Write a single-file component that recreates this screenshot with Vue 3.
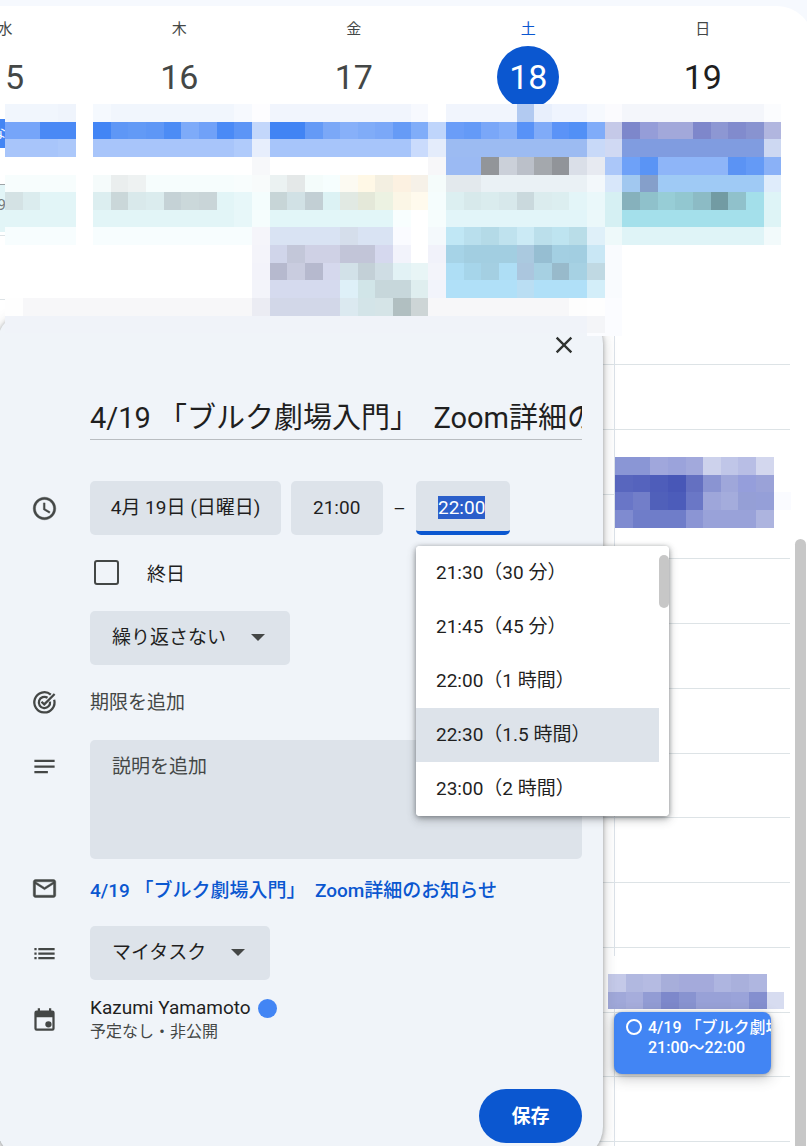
<script setup>
import { onMounted, ref } from 'vue'

const title = ref('4/19 「ブルク劇場入門」\u00a0 Zoom詳細のお知らせ')
const startTime = ref('21:00')
const endTime = ref('22:00')
const allDay = ref(false)
const note = ref('')
const endInput = ref(null)

const days = [
  { name: '木', date: 16 },
  { name: '金', date: 17 },
  { name: '土', date: 18, today: true },
  { name: '日', date: 19, strong: true },
]

const options = [
  '21:30（30 分）',
  '21:45（45 分）',
  '22:00（1 時間）',
  '22:30（1.5 時間）',
  '23:00（2 時間）',
]

// Each row lists cell colours; "*n" repeats a cell and "-" leaves it empty.
const weekRows = [
  'f1f6fd*3 eff4fc - f5f9fe f1f6fd*7 f6f9fe fdfdff f1f5fd*8 f7f9fe - f1f5fd*4 b2caf1 e8effc eff4fe*2 f6f9fe fbfbfe f4f6fb*8 fbfcfe',
  '76a5f9*2 4a89f5*2 - 4285f5 5e97f6 629af6 5e97f6 4c8cf5 7eabf9 70a1f8 4a8af6 5c95f6 c3d7fb 4184f4*2 649af6 7ba8f7 87b0f9 80acf8 7ba8f8 669bf6 80adf9 bfd5fb 6a9df8 649af7 7aa7f8 85aff9 5892f7 80abf8 5b93f7 5290f6 80acf9 c5c9e8 7d87cb 959dd8 a2a8da*2 7e87cb 8d97d3 818bcd 8893d0 b1b6df',
  'a8c5fa*3 acc8fa - a8c5fa*8 b0cbfb e7eefc a7c5fa*8 cadbfc e4ecfb 9cbbf2*8 c8d9f8 d0d9f3 809ce0*8 cdd8f2',
  '-*14 f7f8fa -*9 f7f7f9 9bbaf3*2 929599 cbd0d9 bbc0c9 a4a8ad 919499 dadfe8 e7eaf1 abc7f9 6ea1f8 5a94f5 8eb5f8*4 5b93f4 649af6 8ab1f7',
  'f7fdfd*4 - f5fbfb eaeeee eef2f2 f6fdfd*5 f8fdfd f8fbfb ebf2f2 e4e8e8 f4fcfb f6fefe fcfaf2 fff8e6 f3efe1 fcf1e1 f6f1e8 f5fcfb e3e9ed*2 eaf1f5*6 f3f8fb d8e7fa a1c8f0 859fca 9fcaf5*6 dfecfb',
  'd4e2e4 dbecee e2f5f7*2 - dceef0 cad7d9 d9e9eb dbecee c5d2d6 cbd8da c9d5d8 e2f5f7 e7f7f9 f4fdfd c7d5d7 d1e1e5 c2cfd4 dcf2f4 e1e9e3 e4e8d9 ecf2e2 fbf6e6 fffaed f5fdfd dceff1 d7e9eb daecee d7e8eb cad9dd dbecee dceef0 e3f5f8 eaf8fa d6f0f3 86b1bc 8fc1cb 97cdd6 92c7d0 8cbbc5 729ba3 90c1cb a3dfea def4f7',
  'e2f5f7*4 - e2f5f7*8 e7f7f9 f5fdfd e2f6f8*7 f8fefe - f6fdfd e2f5f9*8 ebf8fa d5f0f3 a4e0eb*8 def4f6',
  'f7fdfe*4 - f7fdfe*9 f5f5fa d9e3f3*4 d5deeb d9e3f3*2 fafbff - f4f9fc c0e7f5 b9dfed b4dae7 bfe2ee cbeaf5 bbdfeb bee4f0 b9dde8 dff0f9 eef9fa dff4f7*8 f2fafb',
  '-*14 f4f4fa d0d5ea c3c7d9 cfd1e5*2 c2c5d8*2 d5d8ee f2f3fb - f1f2fa a6d3e7 a2cee1*3 aac9df 96bed2 a3cfe2 a2cee1 c9e7f5 f9fbfe',
  '-*14 f3f3fa b6b9ce c9ccdf b6b9ce d5d8ed d2e1e8 c3d0d7 cfdde4 e2f2f5 e8f5f6 f3f4fa aedef5 a6d5ea a4cfe2 aedef5 abc6de a6d0e2 98bacb a6d1e3 c0d9e3 f9fbfe',
  '-*14 f3f4fa d5daee*4 def0f8 d1e5e8 c7d7db*2 dfeeef f2f4fb b0e0f8*4 badef3 b0e0f8*3 d3eef9 f9fbfe',
  'fefefe f7f7f9*13 ebecf3 d2d7e8*4 dbe9f0 d3e4e8 d5e4e7 b1bfc1 cdd5d6 f7f7f9*8 fdfdfd fefefe fbfcff',
  'f0f3f9*33 f4f5f8 fbfcff',
]
const afternoonRows = [
  '8a96d5*2 a0a7dc 9ba3db a2a9dc cdd2ec c0c6e8 b8bee5 d3d7ee',
  '5866be 5563bd 4e5dba 4857b7 6470c1 8a94d2 9fa7da 959edb 9aa2d8',
  '6976c7 727ec9 5060ba 4c5cba 6a77c6 9ea6da a4acdc 959fd6 959fd8 fafbff',
  '7f8bd0 6f7dc9*3 8b95d4 99a2d9*3 adb4df',
]
const eveningRows = [
  'c4c9e8 b1b8e0 b5bbe2 a7aeda a4aadb*2 aeb5e0 a9b0dc afb6e0',
  'a0a8d9 a6addc 929cd4 7d88cb 8893d0 98a1d7*2 9aa3d9 848fcf d7dcf0',
]

function toCells(rows) {
  const edge = (n) => Math.round(n * 17.64)
  const cells = []
  rows.forEach((row, r) => {
    let column = 0
    for (const token of row.split(' ')) {
      const [colour, times] = token.split('*')
      const span = Number(times || 1)
      if (colour !== '-') {
        cells.push({
          x: edge(column),
          y: edge(r),
          w: edge(column + span) - edge(column),
          h: edge(r + 1) - edge(r),
          fill: '#' + colour,
        })
      }
      column += span
    }
  })
  return cells
}

const weekCells = toCells(weekRows)
const afternoonCells = toCells(afternoonRows)
const eveningCells = toCells(eveningRows)

onMounted(() => {
  endInput.value.focus({ preventScroll: true })
  endInput.value.select()
})
</script>

<template>
  <div class="page">
    <main class="calendar">
      <header class="days">
        <div class="day-clip">
          <div class="day">
            <span class="day-name">水</span>
            <span class="day-date">15</span>
          </div>
        </div>
        <div v-for="d in days" :key="d.date" class="day" :class="{ today: d.today, strong: d.strong }">
          <span class="day-name">{{ d.name }}</span>
          <span class="day-date">{{ d.date }}</span>
        </div>
      </header>
      <div class="hours">
        <div v-for="n in 16" :key="n" class="hour"></div>
        <div class="day-line"></div>
      </div>
      <div class="edge-event">な</div>
      <div class="edge-event pale">9</div>
      <svg class="mosaic afternoon" width="177" height="71" shape-rendering="crispEdges" aria-hidden="true">
        <rect v-for="(c, i) in afternoonCells" :key="i" :x="c.x" :y="c.y" :width="c.w" :height="c.h" :fill="c.fill" />
      </svg>
      <svg class="mosaic evening" width="182" height="53" shape-rendering="crispEdges" aria-hidden="true">
        <rect width="182" height="35" fill="#fff" />
        <g transform="translate(0 18)">
          <rect v-for="(c, i) in eveningCells" :key="i" :x="c.x" :y="c.y" :width="c.w" :height="c.h" :fill="c.fill" />
        </g>
      </svg>
      <button type="button" class="task-event">
        <svg class="task-ring" width="18" height="18" viewBox="0 0 18 18" aria-hidden="true">
          <circle cx="9" cy="9" r="7" fill="none" stroke="#fff" stroke-width="2" />
        </svg>
        <span class="task-text">
          <span>4/19 「ブルク劇場入門」</span>
          <span>21:00～22:00</span>
        </span>
      </button>
      <div class="page-scroll"></div>
    </main>

    <form class="dialog" role="dialog" aria-label="タスク" @submit.prevent>
      <button type="button" class="close" aria-label="閉じる">
        <svg width="28" height="28" viewBox="0 0 24 24" aria-hidden="true">
          <path fill="#303331" d="M19 6.41 17.59 5 12 10.59 6.41 5 5 6.41 10.59 12 5 17.59 6.41 19 12 13.41 17.59 19 19 17.59 13.41 12z" />
        </svg>
      </button>

      <div class="row title-row">
        <input v-model="title" class="title" type="text" aria-label="タイトル" />
      </div>

      <div class="row">
        <svg class="icon bold" viewBox="0 0 24 24" aria-hidden="true">
          <path d="M11.99 2C6.47 2 2 6.48 2 12s4.47 10 9.99 10C17.52 22 22 17.52 22 12S17.52 2 11.99 2zM12 20c-4.42 0-8-3.58-8-8s3.58-8 8-8 8 3.58 8 8-3.58 8-8 8zm.5-13H11v6l5.25 3.15.75-1.23-4.5-2.67z" />
        </svg>
        <div class="times">
          <button type="button" class="field date">4月 19日 (日曜日)</button>
          <input v-model="startTime" class="field start" type="text" aria-label="開始時間" />
          <span class="dash">–</span>
          <div class="end-wrap">
            <input ref="endInput" v-model="endTime" class="field end" type="text" aria-label="終了時間" />
            <div class="menu">
              <div class="menu-list" role="listbox" aria-label="終了時間">
                <button
                  v-for="(o, i) in options"
                  :key="o"
                  type="button"
                  role="option"
                  class="option"
                  :class="{ active: i === 3 }"
                  :aria-selected="i === 3"
                >{{ o }}</button>
              </div>
              <div class="menu-thumb"></div>
            </div>
          </div>
        </div>
      </div>

      <div class="row all-day">
        <label class="check">
          <input v-model="allDay" type="checkbox" />
          <span>終日</span>
        </label>
      </div>

      <div class="row">
        <div class="drop">
          <select class="field repeat" aria-label="繰り返し">
            <option>繰り返さない</option>
          </select>
          <svg class="caret" width="14" height="7" viewBox="0 0 14 7" aria-hidden="true"><path d="M0 0h14L7 7z" fill="#444746" /></svg>
        </div>
      </div>

      <div class="row deadline">
        <svg class="icon" viewBox="0 0 24 24" fill="none" aria-hidden="true">
          <g class="stroke">
            <path d="M17.6 4.9A9 9 0 1 0 20.6 9.5" />
            <path d="M14.7 7.8A5 5 0 1 0 16.9 11.2" />
            <path d="M9.3 11.3l2.5 2.4 9.2-9.2" />
          </g>
        </svg>
        <button type="button" class="plain">期限を追加</button>
      </div>

      <div class="row note-row">
        <svg class="icon note-icon" viewBox="0 0 24 24" aria-hidden="true">
          <path d="M3 6h18v2H3zM3 11h18v2H3zM3 16h12v2H3z" />
        </svg>
        <textarea v-model="note" class="field note" placeholder="説明を追加" aria-label="説明"></textarea>
      </div>

      <div class="row mail-row">
        <svg class="icon bold" viewBox="0 0 24 24" aria-hidden="true">
          <path d="M20 4H4c-1.100 0-2 .9-2 2v12c0 1.100.9 2 2 2h16c1.100 0 2-.9 2-2V6c0-1.100-.9-2-2-2zm0 14H4V8l8 5 8-5v10zm-8-7L4 6h16z" />
        </svg>
        <a class="link" href="#">4/19 「ブルク劇場入門」&nbsp; Zoom詳細のお知らせ</a>
      </div>

      <div class="row">
        <svg class="icon" viewBox="0 0 24 24" aria-hidden="true">
          <path d="M3 7h2v2H3zM3 11h2v2H3zM3 15h2v2H3zM6.500 7H21v2H6.500zM6.500 11H21v2H6.500zM6.500 15H21v2H6.500z" />
        </svg>
        <div class="drop">
          <select class="field list" aria-label="リスト">
            <option>マイタスク</option>
          </select>
          <svg class="caret" width="14" height="7" viewBox="0 0 14 7" aria-hidden="true"><path d="M0 0h14L7 7z" fill="#444746" /></svg>
        </div>
      </div>

      <div class="row person">
        <svg class="icon" viewBox="0 0 24 24" aria-hidden="true">
          <path fill-rule="evenodd" d="M19 4h-1V2h-2v2H8V2H6v2H5a2 2 0 0 0-2 2v14a2 2 0 0 0 2 2h14a2 2 0 0 0 2-2V6a2 2 0 0 0-2-2zm0 16H5V10h14zM15.500 13.500a2.800 2.800 0 1 0 0 5.600 2.800 2.800 0 0 0 0-5.600z" />
        </svg>
        <div>
          <div class="name">Kazumi Yamamoto<span class="dot"></span></div>
          <div class="status">予定なし・非公開</div>
        </div>
      </div>

      <div class="actions">
        <button type="submit" class="save">保存</button>
      </div>
    </form>

    <svg class="mosaic week" width="802" height="232" shape-rendering="crispEdges" aria-hidden="true">
      <rect width="790" height="212" fill="#fff" />
      <rect x="582" y="226" width="35" height="6" fill="#fbfcff" />
      <rect v-for="(c, i) in weekCells" :key="i" :x="c.x" :y="c.y" :width="c.w" :height="c.h" :fill="c.fill" />
    </svg>
  </div>
</template>

<style>
body {
  background: #f6f9fe;
}
</style>

<style scoped>
.page {
  position: relative;
  display: grid;
  min-height: 100vh;
  overflow: hidden;
  background: #f6f9fe;
  color: #1f1f1f;
  font-family: Roboto, "Noto Sans CJK JP", sans-serif;
  font-size: 19px;
}
.page * {
  box-sizing: border-box;
}
button,
input,
select,
textarea {
  margin: 0;
  border: 0;
  color: inherit;
  font: inherit;
}
button {
  cursor: pointer;
}

/* Calendar */
.calendar {
  position: relative;
  grid-area: 1 / 1;
  display: flex;
  flex-direction: column;
  min-width: 0;
  margin: 6px -6px 0 0;
  border-top-right-radius: 36px;
  background: #fff;
}
.days {
  display: grid;
  grid-template-columns: 92px repeat(4, 1fr);
  height: 98px;
  padding-right: 23px;
}
.day-clip {
  display: flex;
  justify-content: flex-end;
  overflow: hidden;
}
.day {
  display: flex;
  flex-direction: column;
  align-items: center;
  color: #444746;
}
.day-clip .day {
  flex: 0 0 174px;
}
.day-name {
  height: 40px;
  font-size: 15px;
  line-height: 46px;
}
.day-date {
  flex: none;
  width: 62px;
  height: 62px;
  border-radius: 50%;
  font-size: 34px;
  line-height: 62px;
  text-align: center;
}
.today .day-name {
  color: #0b57d0;
}
.today .day-date {
  background: #0b57d0;
  color: #fff;
}
.strong .day-date {
  color: #1f1f1f;
}
.hours {
  position: relative;
  flex: 1;
  display: grid;
  grid-auto-rows: 1fr;
  margin: 2px 23px 4px 0;
}
.hour {
  border-bottom: 1px solid #dde3e6;
}
.hour:first-child {
  border-color: transparent;
}
.day-line {
  position: absolute;
  top: 0;
  right: 175px;
  bottom: -4px;
  width: 1px;
  background: #dde3ea;
}
.edge-event {
  position: absolute;
  top: 113px;
  left: 0;
  display: flex;
  justify-content: flex-end;
  width: 6px;
  height: 29px;
  overflow: hidden;
  background: #4285f4;
  color: #fff;
  font-size: 15px;
  line-height: 29px;
}
.edge-event.pale {
  top: 178px;
  height: 48px;
  border-top: 1px solid #9fa5a8;
  background: #e2f5f7;
  color: #777b7d;
  line-height: 40px;
}
.mosaic {
  position: absolute;
}
.afternoon {
  top: 451px;
  right: 21px;
}
.evening {
  top: 950px;
  right: 23px;
}
.week {
  top: 104px;
  left: 5px;
}
.task-event {
  position: absolute;
  top: 1006px;
  right: 42px;
  display: flex;
  align-items: flex-start;
  gap: 5px;
  width: 157px;
  height: 62px;
  padding: 6px 0 0 11px;
  overflow: hidden;
  border-radius: 8px;
  background: #4285f4;
  box-shadow: 0 4px 14px rgba(60, 64, 67, 0.3), 0 1px 4px rgba(60, 64, 67, 0.4);
  color: #fff;
  font-size: 16px;
  font-weight: 500;
  line-height: 20px;
  text-align: left;
  white-space: nowrap;
}
.task-ring {
  flex: none;
}
.task-text {
  display: flex;
  flex-direction: column;
}
.page-scroll {
  position: absolute;
  top: 533px;
  right: 7px;
  bottom: -10px;
  width: 11px;
  border-radius: 6px;
  background: #c7c7c7;
}

/* Dialog */
.dialog {
  position: relative;
  grid-area: 1 / 1;
  display: flex;
  flex-direction: column;
  align-self: start;
  min-width: 0;
  margin: 312px 204px -13px -3px;
  padding: 19px 21px 16px 3px;
  border-radius: 32px;
  background: #f0f4f9;
  box-shadow: 0 4px 14px rgba(60, 64, 67, 0.28), 0 1px 4px rgba(60, 64, 67, 0.4);
}
.close {
  display: flex;
  align-self: flex-end;
  margin-right: 4px;
  padding: 0;
  background: none;
}
.row {
  display: grid;
  grid-template-columns: 31px 27px 32px minmax(0, 1fr);
  align-items: center;
}
.row > :last-child {
  grid-column: 4;
}
.icon {
  grid-column: 2;
  width: 27px;
  height: 27px;
  fill: #444746;
}
.bold {
  stroke: #444746;
  stroke-width: 0.4;
}
.stroke {
  fill: none;
  stroke: #444746;
  stroke-width: 2;
}
.title-row {
  margin: 32px 0 41px;
}
.title {
  width: 100%;
  height: 49px;
  padding: 0;
  border-bottom: 1px solid #b9bdc1;
  outline: none;
  background: none;
  font-size: 29px;
}
.times {
  display: flex;
  align-items: center;
}
.field {
  height: 54px;
  padding: 0 22px 2px;
  border-radius: 5px;
  outline: none;
  background: #dde3ea;
}
.date {
  flex: none;
  width: 191px;
  padding: 0 0 5px;
  white-space: nowrap;
}
.start {
  width: 92px;
  margin-left: 10px;
}
.dash {
  width: 33px;
  text-align: center;
}
.end-wrap {
  position: relative;
  width: 94px;
}
.end {
  display: block;
  width: 100%;
  padding: 2px 22px 0;
  border-bottom: 4px solid #0b57d0;
  line-height: 32px;
}
.end::selection {
  background: #2b5fca;
  color: #fff;
}
.menu {
  position: absolute;
  z-index: 2;
  top: 65px;
  left: 0;
  width: 253px;
  overflow: hidden;
  padding-right: 10px;
  border-radius: 4px;
  background: #fff;
}
.end-wrap::after {
  content: "";
  position: absolute;
  z-index: 1;
  top: 65px;
  left: 0;
  width: 253px;
  height: 270px;
  border-radius: 4px;
  box-shadow: 0 4px 10px rgba(60, 64, 67, 0.3), 0 1px 5px rgba(60, 64, 67, 0.5);
}
.option {
  display: block;
  width: 100%;
  height: 54px;
  padding: 0 20px 5px;
  background: #fff;
  text-align: left;
  white-space: nowrap;
}
.option.active {
  background: #dde3ea;
}
.menu-thumb {
  position: absolute;
  top: 9px;
  right: 0;
  width: 10px;
  height: 53px;
  border-radius: 5px;
  background: #c7c7c7;
}
.all-day {
  height: 76px;
}
.check {
  display: flex;
  align-items: center;
  gap: 28px;
  padding: 0 0 2px 4px;
}
.check input {
  width: 25px;
  height: 25px;
  border: 2px solid #444746;
  border-radius: 3px;
  appearance: none;
}
.drop {
  position: relative;
  justify-self: start;
}
.drop select {
  display: block;
  appearance: none;
}
.repeat {
  width: 200px;
}
.list {
  width: 180px;
}
.caret {
  position: absolute;
  top: 23px;
  right: 25px;
  pointer-events: none;
}
.deadline {
  height: 75px;
}
.plain {
  justify-self: start;
  padding: 0 0 5px;
  background: none;
  color: #444746;
}
.note-row {
  align-items: start;
}
.note-icon {
  margin-top: 13px;
}
.note {
  display: block;
  width: 100%;
  height: 119px;
  padding: 13px 22px;
  line-height: 28px;
  resize: none;
}
.note::placeholder {
  color: #444746;
  opacity: 1;
}
.mail-row {
  height: 58px;
  margin-bottom: 9px;
}
.link {
  color: #0b57d0;
  font-weight: 500;
  text-decoration: none;
  white-space: nowrap;
}
.person {
  margin-top: 15px;
}
.name {
  display: flex;
  align-items: center;
  gap: 7px;
  line-height: 26px;
}
.dot {
  width: 19px;
  height: 19px;
  border-radius: 50%;
  background: #4285f4;
}
.status {
  color: #444746;
  font-size: 16px;
  line-height: 22px;
}
.actions {
  display: flex;
  justify-content: flex-end;
  margin-top: 46px;
}
.save {
  width: 103px;
  height: 54px;
  padding: 0 0 4px;
  border-radius: 27px;
  background: #0b57d0;
  color: #fff;
  font-weight: 700;
}
</style>
